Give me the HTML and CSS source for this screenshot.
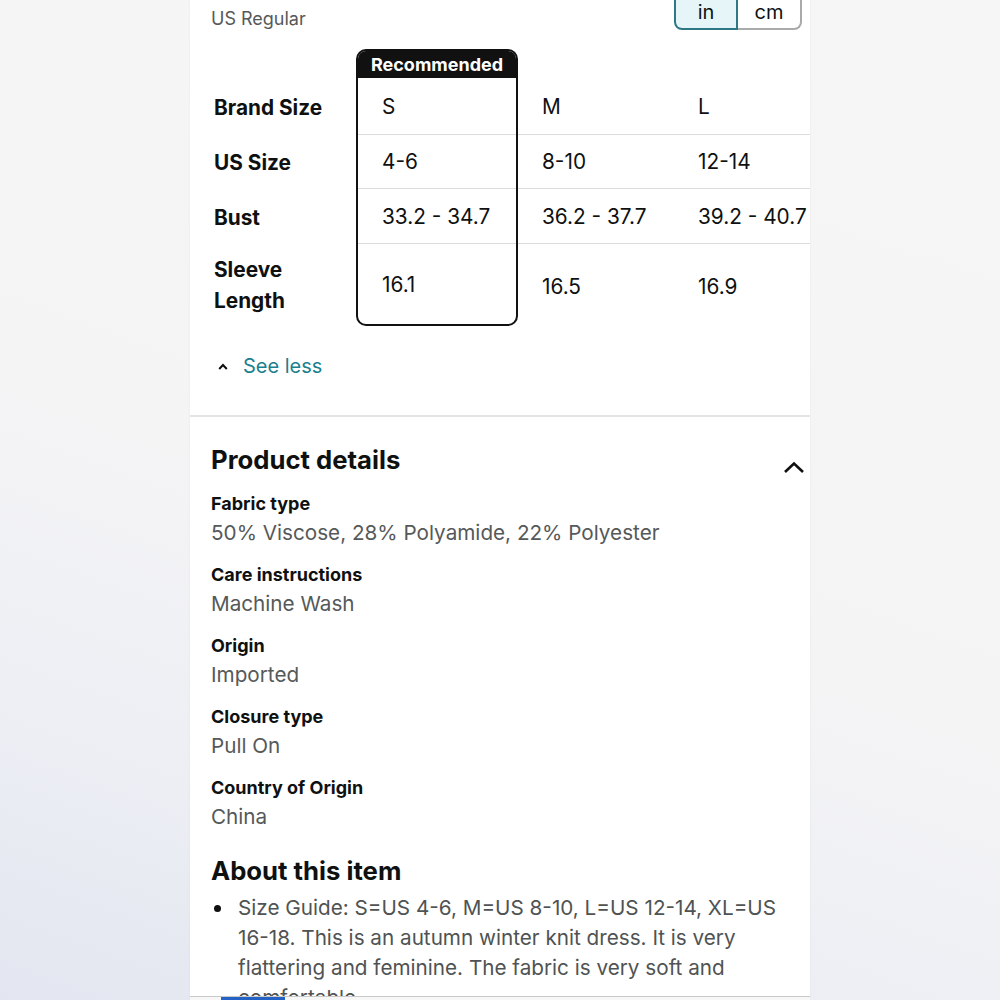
FILE: index.html
```html
<!DOCTYPE html>
<html lang="en">
<head>
<meta charset="utf-8">
<title>Size chart and product details</title>
<link rel="stylesheet" href="styles.css">
</head>
<body>
<div class="panel">
  <div class="scroll">
    <div class="content">
      <div class="top-row">
        <div class="fit">US Regular</div>
        <div class="unit-toggle">
          <div class="unit unit-active">in</div>
          <div class="unit unit-off">cm</div>
        </div>
      </div>

      <div class="size-table">
        <div class="col col-labels">
          <div class="cell r1">Brand Size</div>
          <div class="cell r2">US Size</div>
          <div class="cell r3">Bust</div>
          <div class="cell r4 wrap">Sleeve Length</div>
        </div>
        <div class="col col-rec">
          <div class="rec-head">Recommended</div>
          <div class="cell r1 line">S</div>
          <div class="cell r2 line">4-6</div>
          <div class="cell r3 line">33.2 - 34.7</div>
          <div class="cell r4">16.1</div>
        </div>
        <div class="col col-size">
          <div class="cell r1 line">M</div>
          <div class="cell r2 line">8-10</div>
          <div class="cell r3 line">36.2 - 37.7</div>
          <div class="cell r4 low">16.5</div>
        </div>
        <div class="col col-size">
          <div class="cell r1 line">L</div>
          <div class="cell r2 line">12-14</div>
          <div class="cell r3 line">39.2 - 40.7</div>
          <div class="cell r4 low">16.9</div>
        </div>
      </div>

      <div class="see-less">
        <svg class="caret" width="10" height="7" viewBox="0 0 10 7"><polyline points="1.2,6 5,2 8.8,6" fill="none" stroke="#0f1111" stroke-width="2"/></svg>
        <span class="link">See less</span>
      </div>
    </div>

    <div class="divider"></div>

    <div class="content">
      <div class="section-head">
        <h2 class="h2">Product details</h2>
        <svg class="chev" width="22" height="15" viewBox="0 0 22 15"><polyline points="2,13 11,4.5 20,13" fill="none" stroke="#0f1111" stroke-width="2.6"/></svg>
      </div>

      <div class="details">
        <div class="detail">
          <div class="d-label">Fabric type</div>
          <div class="d-value">50% Viscose, 28% Polyamide, 22% Polyester</div>
        </div>
        <div class="detail">
          <div class="d-label">Care instructions</div>
          <div class="d-value">Machine Wash</div>
        </div>
        <div class="detail">
          <div class="d-label">Origin</div>
          <div class="d-value">Imported</div>
        </div>
        <div class="detail">
          <div class="d-label">Closure type</div>
          <div class="d-value">Pull On</div>
        </div>
        <div class="detail">
          <div class="d-label">Country of Origin</div>
          <div class="d-value">China</div>
        </div>
      </div>

      <h2 class="h2 about">About this item</h2>
      <ul class="bullets">
        <li class="bullet"><span class="dot"></span><span class="b-text">Size Guide: S=US 4-6, M=US 8-10, L=US 12-14, XL=US 16-18. This is an autumn winter knit dress. It is very flattering and feminine. The fabric is very soft and comfortable.</span></li>
      </ul>
    </div>
  </div>
  <div class="bottom-bar"><div class="bottom-tab"></div></div>
</div>
</body>
</html>
```
FILE: styles.css
```css
* { box-sizing: border-box; }

html, body {
  margin: 0;
  height: 100%;
}

body {
  background: linear-gradient(200deg, #f6f6f6 0%, #f4f4f5 55%, #eceef4 80%, #e3e5f0 100%);
  font-family: "Inter", "Liberation Sans", sans-serif;
  color: #0f1111;
  overflow: hidden;
}

.panel {
  width: 620px;
  height: 1000px;
  margin-left: 190px;
  background: #fff;
  display: flex;
  flex-direction: column;
  box-shadow: 0 0 2px rgba(0,0,0,0.06);
}

.scroll {
  height: 996px;
  overflow: hidden;
  flex: none;
}

.content {
  padding: 0 5px 0 21px;
}

/* top row */
.top-row {
  display: flex;
  justify-content: space-between;
  align-items: flex-start;
  height: 30px;
}

.fit {
  margin-top: 8px;
  font-size: 18px;
  line-height: 22px;
  color: #565959;
}

.unit-toggle {
  display: flex;
  margin-right: 3px;
}

.unit {
  width: 64px;
  height: 30px;
  padding-bottom: 5px;
  display: flex;
  align-items: center;
  justify-content: center;
  font-size: 20px;
  line-height: 24px;
  color: #0f1111;
}

.unit-active {
  background: #e6f6f8;
  border: 2px solid #2e7886;
  border-top: none;
  border-radius: 0 0 0 8px;
}

.unit-off {
  background: #fff;
  border: 2px solid #a9abab;
  border-left: none;
  border-top: none;
  border-radius: 0 0 8px 0;
}

/* size table */
.size-table {
  display: flex;
  margin-top: 19px;
}

.col {
  flex: none;
  display: flex;
  flex-direction: column;
}

.col-labels {
  width: 145px;
  padding-top: 29px;
  padding-left: 3px;
  padding-right: 20px;
  font-weight: 700;
  font-size: 21px;
}

.col-rec {
  width: 162px;
  border: 2px solid #111;
  border-radius: 10px;
  overflow: hidden;
}

.rec-head {
  height: 27px;
  background: #111;
  color: #fff;
  font-weight: 700;
  font-size: 18px;
  line-height: 27px;
  text-align: center;
  padding-bottom: 2px;
}

.col-size {
  width: 156px;
  padding-top: 29px;
}

.cell {
  display: flex;
  align-items: center;
  font-size: 20.8px;
  line-height: 31px;
}

.col-labels .cell {
  padding-top: 1px;
}

.col-rec .cell,
.col-size .cell {
  padding-left: 24px;
}

.r1 { height: 57px; }
.r2 { height: 54px; }
.r3 { height: 55px; }
.r4 { height: 80px; }

.low { padding-top: 4px; }

.line { border-bottom: 1px solid #dcdcdc; }

/* see less */
.see-less {
  display: flex;
  align-items: center;
  height: 24px;
  margin-top: 28px;
}

.caret {
  margin-left: 7px;
  margin-right: 15px;
}

.link {
  color: #1a7f8e;
  font-size: 20px;
  line-height: 24px;
}

.divider {
  height: 2px;
  background: #e4e4e4;
  margin-top: 37px;
}

/* product details */
.section-head {
  display: flex;
  justify-content: space-between;
  align-items: flex-start;
  margin-top: 27px;
}

.h2 {
  margin: 0;
  font-size: 25.7px;
  line-height: 32px;
  font-weight: 700;
  color: #0f1111;
}

.chev {
  margin-top: 15px;
  margin-right: 0;
}

.details {
  padding-top: 16px;
  padding-bottom: 1px;
}

.detail {
  margin-bottom: 16px;
}

.d-label {
  font-size: 18px;
  line-height: 24px;
  font-weight: 700;
}

.d-value {
  margin-top: 3px;
  font-size: 20.7px;
  line-height: 28px;
  color: #565959;
}

.about {
  margin-top: 7px;
}

.bullets {
  list-style: none;
  margin: 6px 0 0;
  padding: 0;
}

.bullet {
  display: flex;
  font-size: 20.7px;
  line-height: 30px;
  color: #4f5353;
}

.dot {
  flex: none;
  width: 27px;
  position: relative;
}

.dot::before {
  content: "";
  position: absolute;
  left: 3px;
  top: 12px;
  width: 7px;
  height: 7px;
  border-radius: 50%;
  background: #0f1111;
}

.b-text {
  flex: 1;
}

/* bottom */
.bottom-bar {
  height: 4px;
  border-top: 1px solid #c9c9c9;
  background: #f7f7f7;
  padding-left: 31px;
}

.bottom-tab {
  width: 64px;
  height: 3px;
  background: #2462c6;
}
```
